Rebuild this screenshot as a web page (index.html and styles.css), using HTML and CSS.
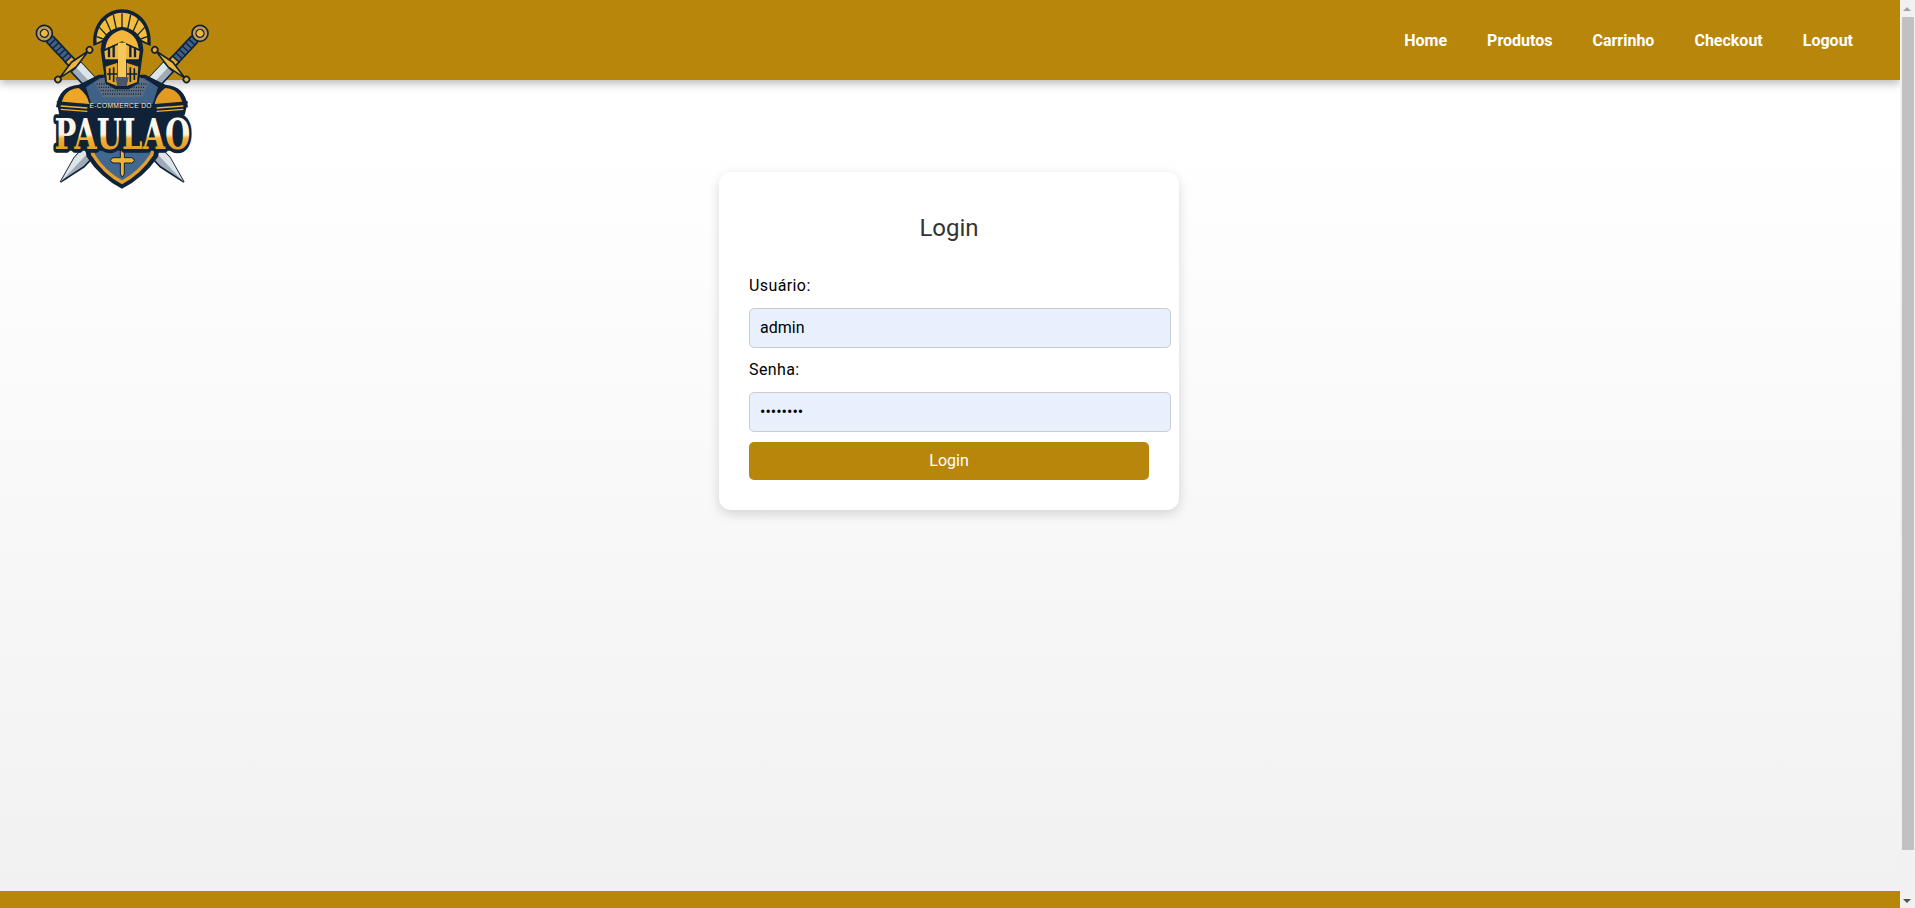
FILE: index.html
```html
<!DOCTYPE html>
<html lang="pt-BR">
<head>
    <meta charset="UTF-8">
    <meta name="viewport" content="width=device-width, initial-scale=1.0">
    <title>Login</title>
    <link rel="stylesheet" href="styles.css">
</head>
<body>
    <header class="site-header">
        <a href="#" class="logo" aria-label="E-commerce do Paulão">
            <svg viewBox="0 0 720 600" width="240" height="200">
                <defs>
                    <linearGradient id="letterFill" x1="0" y1="0" x2="0" y2="1">
                        <stop offset="0" stop-color="#ffffff"/>
                        <stop offset="0.5" stop-color="#fdf3dc"/>
                        <stop offset="0.58" stop-color="#f2b136"/>
                        <stop offset="1" stop-color="#d88d1d"/>
                    </linearGradient>
                    <g id="sword" stroke="#0f2238" stroke-width="5">
                        <path d="M139 -20 H530 L612 0 L530 20 H139 Z" fill="#9fabb8"/>
                        <path d="M139 -20 H530 L612 0 H139 Z" fill="#dfe4e8" stroke="none"/>
                        <rect x="20" y="-13" width="104" height="26" rx="8" fill="#3f6187"/>
                        <path d="M36 -12 V12 M50 -12 V12 M64 -12 V12 M78 -12 V12 M92 -12 V12" stroke-width="4"/>
                        <rect x="106" y="-13" width="18" height="26" fill="#e9a92e"/>
                        <path d="M129 -60 L139 0 L129 60 L119 0 Z" fill="#f0b63c" stroke-linejoin="round"/>
                        <circle cx="129" cy="-65" r="9" fill="#e9a92e"/>
                        <circle cx="129" cy="65" r="9" fill="#e9a92e"/>
                        <circle r="24" fill="#c99a52"/>
                        <circle r="12" fill="#f0b640" stroke-width="4"/>
                    </g>
                </defs>

                <use href="#sword" transform="translate(133 100) rotate(46.85)"/>
                <use href="#sword" transform="translate(733 0) scale(-1 1) translate(133 100) rotate(46.85)"/>

                <!-- ombros e cota de malha -->
                <path d="M168 322 Q176 258 236 254 L296 224 H436 L496 254 Q556 258 564 322 Z" fill="#0f2238"/>
                <path d="M184 312 Q192 268 236 264 Q262 282 268 312 Z" fill="#efa526"/>
                <path d="M548 312 Q540 268 496 264 Q470 282 464 312 Z" fill="#e29a22"/>
                <path d="M258 262 L300 234 H432 L474 262 L458 312 H274 Z" fill="#3f6187"/>
                <path d="M284 248 L312 232 H420 L448 248 L424 292 H308 Z" fill="#5c6d82"/>
                <path d="M290 252 H442 M296 262 H436 M302 272 H430 M308 282 H424" stroke="#16263a" stroke-width="4" stroke-dasharray="3 4"/>

                <!-- penacho -->
                <path d="M280 138 C274 66 322 28 366 28 C412 28 458 66 452 138 L410 120 H322 Z" fill="#0f2238"/>
                <path d="M290 128 C286 74 328 38 366 38 C406 38 446 74 442 128 L408 112 H324 Z" fill="#f5bd3a"/>
                <path d="M366 100 V40 M352 102 L340 44 M338 106 L316 56 M326 112 L298 82 M318 120 L290 110 M380 102 L392 44 M394 106 L416 56 M406 112 L434 82 M414 120 L442 110" stroke="#0f2238" stroke-width="4"/>

                <!-- elmo -->
                <path d="M302 150 Q304 90 366 80 Q428 90 430 150 L416 250 L386 268 H346 L316 250 Z" fill="#0f2238"/>
                <path d="M316 146 Q322 100 366 90 Q410 100 416 146 L366 124 Z" fill="#f3b63a"/>
                <path d="M313 154 L366 128 L419 154 L416 178 H316 Z" fill="#f0b540"/>
                <path d="M317 200 L352 188 V258 L321 246 Z M415 200 L380 188 V258 L411 246 Z" fill="#e3a128"/>
                <path d="M354 128 H378 V232 H354 Z" fill="#f6c85a"/>
                <path d="M327 142 V172 M341 136 V172 M391 136 V172 M405 142 V172" stroke="#0f2238" stroke-width="7"/>
                <path d="M322 182 H352 L348 190 H326 Z M410 182 H380 L384 190 H406 Z" fill="#0f2238"/>
                <path d="M329 205 V240 M341 202 V246 M391 202 V246 M403 205 V240 M321 222 H351 M381 222 H411" stroke="#0f2238" stroke-width="5"/>
                <path d="M346 232 H386 L380 258 H352 Z" fill="#4a5666"/>

                <!-- escudo -->
                <path d="M252 430 H482 L474 470 Q432 532 366 566 Q300 532 260 470 Z" fill="#0f2238"/>
                <path d="M268 440 H466 L460 466 Q424 522 366 553 Q308 522 274 466 Z" fill="#e4a02a"/>
                <path d="M278 440 H456 L451 462 Q418 512 366 541 Q314 512 284 462 Z" fill="#41688f"/>
                <path d="M361 444 L367 436 L373 444 V473 H395 L405 481 L395 489 H373 V522 L367 532 L361 522 V489 H339 L330 481 L339 473 H361 Z" fill="#f1b133" stroke="#0f2238" stroke-width="3"/>

                <!-- faixa -->
                <path d="M170 304 L268 312 H464 L564 304 L554 346 H178 Z" fill="#0f2238"/>
                <path d="M182 318 L262 324 M182 328 L262 334 M550 318 L470 324 M550 328 L470 334" stroke="#efb136" stroke-width="4"/>
                <path d="M186 344 H548 V452 H186 Z" fill="#0f2238"/>
                <text x="362" y="324" class="logo-small">E-COMMERCE DO</text>

                <text class="logo-big" transform="translate(367 447) scale(0.68 1)">PAULAO</text>
            </svg>
        </a>
        <nav class="main-nav">
            <a href="#">Home</a>
            <a href="#">Produtos</a>
            <a href="#">Carrinho</a>
            <a href="#">Checkout</a>
            <a href="#">Logout</a>
        </nav>
    </header>

    <main class="content">
        <div class="login-card">
            <h2>Login</h2>
            <form>
                <label for="usuario">Usuário:</label>
                <input type="text" id="usuario" name="usuario" value="admin">
                <label for="senha">Senha:</label>
                <input type="password" id="senha" name="senha" value="12345678">
                <button type="submit">Login</button>
            </form>
        </div>
    </main>

    <footer class="site-footer"></footer>

    <aside class="scrollbar">
        <span class="scroll-arrow up"></span>
        <span class="scroll-thumb"></span>
        <span class="scroll-arrow down"></span>
    </aside>
</body>
</html>
```

FILE: styles.css
```css
* {
    box-sizing: border-box;
}
html {
    overflow: hidden;
}
body {
    margin: 0;
    padding-right: 15px;
    font-family: Roboto, "Liberation Sans", sans-serif;
    background: linear-gradient(to bottom, #ffffff 15%, #f0f0f0 100%);
}
.site-header {
    position: relative;
    z-index: 2;
    display: flex;
    justify-content: flex-end;
    align-items: center;
    height: 80px;
    padding-right: 47px;
    background-color: #b8860b;
    box-shadow: 0 4px 8px rgba(0, 0, 0, 0.25);
}
.logo {
    position: absolute;
    left: 0;
    top: 0;
    display: block;
    width: 240px;
    height: 200px;
}
.logo-small {
    font-family: "Liberation Sans", sans-serif;
    font-size: 20px;
    letter-spacing: 1px;
    fill: #f4ead6;
    text-anchor: middle;
}
.logo-big {
    font-family: "DejaVu Serif", serif;
    font-size: 128px;
    font-weight: 700;
    fill: url(#letterFill);
    stroke: #0f2238;
    stroke-width: 22px;
    stroke-linejoin: round;
    paint-order: stroke;
    text-anchor: middle;
}
.main-nav {
    display: flex;
    gap: 40px;
}
.main-nav a {
    color: #fff;
    font-size: 16px;
    font-weight: 700;
    text-decoration: none;
}
.content {
    min-height: 811px;
    padding: 92px 2px 0 0;
}
.login-card {
    width: 460px;
    height: 338px;
    margin: 0 auto;
    padding: 30px;
    background-color: #fff;
    border-radius: 12px;
    box-shadow: 0 4px 12px rgba(0, 0, 0, 0.15);
}
.login-card h2 {
    margin: 12px 0 34px;
    color: #333;
    font-size: 24px;
    font-weight: 400;
    text-align: center;
}
.login-card label {
    display: block;
    margin-bottom: 13px;
    color: #000;
    font-size: 16px;
    letter-spacing: 0.4px;
}
.login-card input {
    display: block;
    width: 422px;
    height: 40px;
    padding: 8px 10px 10px;
    border: 1px solid #ccc;
    border-radius: 5px;
    background-color: #e8f0fe;
    color: #000;
    font-family: Roboto, "Liberation Sans", sans-serif;
    font-size: 16px;
}
.login-card input + label {
    margin-top: 12px;
}
.login-card button {
    display: block;
    width: 100%;
    height: 38px;
    margin-top: 10px;
    padding: 0 0 2px;
    border: none;
    border-radius: 5px;
    background-color: #b8860b;
    color: #fff;
    font-family: Roboto, "Liberation Sans", sans-serif;
    font-size: 16px;
    cursor: pointer;
}
.site-footer {
    height: 62px;
    background-color: #b8860b;
}
.scrollbar {
    position: fixed;
    z-index: 3;
    top: 0;
    right: 0;
    bottom: 0;
    display: flex;
    flex-direction: column;
    width: 15px;
    background-color: #f1f1f1;
}
.scroll-arrow {
    flex: none;
    width: 0;
    height: 0;
    margin: 7px 0 0 3px;
    border-left: 4.5px solid transparent;
    border-right: 4.5px solid transparent;
}
.scroll-arrow.up {
    margin-bottom: 6px;
    border-bottom: 4px solid #a3a3a3;
}
.scroll-arrow.down {
    margin: auto 0 5px 3px;
    border-top: 4px solid #505050;
}
.scroll-thumb {
    flex: none;
    height: 833px;
    margin-left: 2px;
    margin-right: 1px;
    background-color: #c1c1c1;
}
```
